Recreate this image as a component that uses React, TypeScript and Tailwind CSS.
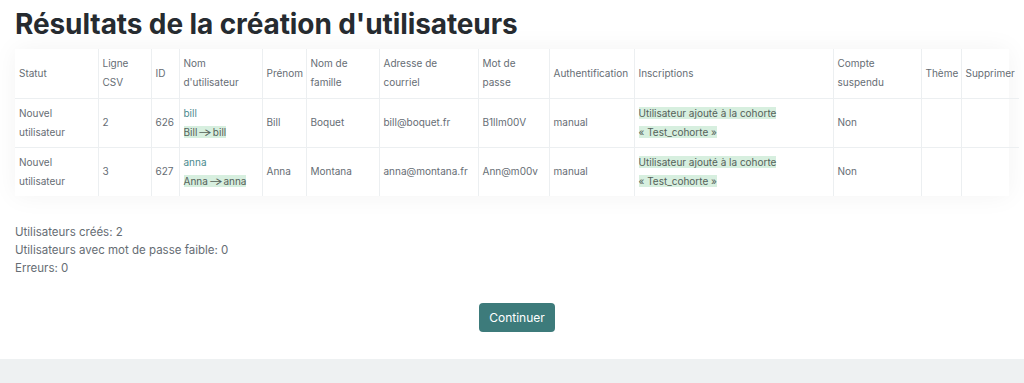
import React from "react";

const cols = [83, 53, 28, 83, 44, 73, 99, 71, 85, 199, 88, 40, 58];

const headers = [
  "Statut",
  "Ligne CSV",
  "ID",
  "Nom d'utilisateur",
  "Prénom",
  "Nom de famille",
  "Adresse de courriel",
  "Mot de passe",
  "Authentification",
  "Inscriptions",
  "Compte suspendu",
  "Thème",
  "Supprimer",
];

const rows = [
  { line: "2", id: "626", user: "bill", from: "Bill", first: "Bill", last: "Boquet", mail: "bill@boquet.fr", pwd: "B1llm00V" },
  { line: "3", id: "627", user: "anna", from: "Anna", first: "Anna", last: "Montana", mail: "anna@montana.fr", pwd: "Ann@m00v" },
];

const td = "border-r border-[#eceff1] px-[4px] py-[5px] align-middle";

export default function App() {
  return (
    <div className="min-h-[383px] bg-white text-[#495057]" style={{ fontFamily: "Inter, 'Noto Sans', sans-serif" }}>
      <div className="px-[15px] pb-[27px]">
        <h1 className="pt-[6px] text-[28px] font-bold leading-[36px] tracking-[-0.1px] text-[#262b30]">
          Résultats de la création d'utilisateurs
        </h1>

        <div className="mt-[7px] bg-white shadow-[0_0_24px_rgba(0,0,0,0.05)]">
          <table className="w-[1004px] table-fixed border-collapse text-[10px] leading-[19px] text-[#666d74]">
            <colgroup>
              {cols.map((w, i) => (
                <col key={i} style={{ width: w }} />
              ))}
            </colgroup>
            <thead>
              <tr className="h-[49px] border-b border-[#eceff1]">
                {headers.map((h) => (
                  <th key={h} className={`${td} text-left font-normal last:border-r-0`}>
                    {h}
                  </th>
                ))}
              </tr>
            </thead>
            <tbody>
              {rows.map((r) => (
                <tr key={r.id} className="h-[49px] border-b border-[#eceff1] last:border-b-0">
                  <td className={td}>Nouvel utilisateur</td>
                  <td className={td}>{r.line}</td>
                  <td className={td}>{r.id}</td>
                  <td className={td}>
                    <div className="text-[#4a8a8e]">{r.user}</div>
                    <div>
                      <span className="bg-[#d7efdf] text-[#55625a]">
                        {r.from}
                        <span className="mx-[3px] inline-block scale-x-[1.6]">→</span>
                        {r.user}
                      </span>
                    </div>
                  </td>
                  <td className={td}>{r.first}</td>
                  <td className={td}>{r.last}</td>
                  <td className={td}>{r.mail}</td>
                  <td className={td}>{r.pwd}</td>
                  <td className={td}>manual</td>
                  <td className={td}>
                    <span className="bg-[#d7efdf] text-[#55625a]">
                      Utilisateur ajouté à la cohorte
                      <br />« Test_cohorte »
                    </span>
                  </td>
                  <td className={td}>Non</td>
                  <td className={td}></td>
                  <td className={`${td} border-r-0`}></td>
                </tr>
              ))}
            </tbody>
          </table>
        </div>

        <div className="mt-[27px] text-[11.5px] leading-[18px] text-[#666d74]">
          <div>Utilisateurs créés: 2</div>
          <div>Utilisateurs avec mot de passe faible: 0</div>
          <div>Erreurs: 0</div>
        </div>

        <div className="mt-[26px] flex justify-center pl-[10px]">
          <button className="h-[29px] rounded-[4px] bg-[#3d7b7b] px-[10px] text-[12px] text-white">
            Continuer
          </button>
        </div>
      </div>
      <div className="h-[25px] bg-[#eef1f2]" />
    </div>
  );
}
